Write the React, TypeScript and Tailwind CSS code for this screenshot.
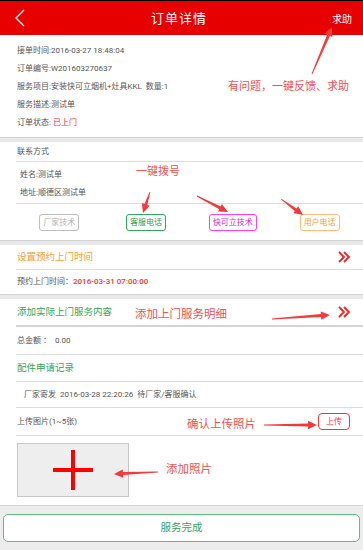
import React from "react";

function arrowPoints(x1: number, y1: number, x2: number, y2: number) {
  const dx = x2 - x1;
  const dy = y2 - y1;
  const L = Math.hypot(dx, dy);
  const ux = dx / L;
  const uy = dy / L;
  const nx = -uy;
  const ny = ux;
  const headLen = 9;
  const headW = 4.2;
  const w0 = 0.4;
  const w1 = 1.5;
  const bx = x2 - ux * headLen;
  const by = y2 - uy * headLen;
  const pts: [number, number][] = [
    [x1 + nx * w0, y1 + ny * w0],
    [bx + nx * w1, by + ny * w1],
    [bx + nx * headW, by + ny * headW],
    [x2, y2],
    [bx - nx * headW, by - ny * headW],
    [bx - nx * w1, by - ny * w1],
    [x1 - nx * w0, y1 - ny * w0],
  ];
  return pts.map((p) => p[0].toFixed(1) + "," + p[1].toFixed(1)).join(" ");
}

const arrows: [number, number, number, number][] = [
  [312, 74, 332, 27],
  [150, 192, 143, 213],
  [197, 196, 228, 212],
  [281, 199, 303, 215],
  [272, 319, 330, 315],
  [264, 425, 317, 425],
  [158, 472, 114, 474],
];

function Chevrons() {
  return (
    <svg width="14" height="14" viewBox="0 0 14 14" fill="none">
      <polyline points="2,2 7,7 2,12" stroke="#ff1f1f" strokeWidth="1.8" />
      <polyline points="7,2 12,7 7,12" stroke="#ff1f1f" strokeWidth="1.8" />
    </svg>
  );
}

export default function App() {
  return (
    <div className="relative w-[363px] min-h-[550px] bg-[#ededed] font-[family-name:Roboto,'Noto_Sans_CJK_SC',sans-serif] overflow-hidden">
      {/* Header */}
      <div className="h-[35px] border-t border-black bg-[#e60000] flex items-center justify-between px-[14px] text-white">
        <svg width="12" height="18" viewBox="0 0 12 18" fill="none">
          <polyline points="10,1 2,9 10,17" stroke="#ffffff" strokeWidth="1.3" />
        </svg>
        <div className="text-[13px] leading-none tracking-[1px]">订单详情</div>
        <div className="text-[10px] leading-none mr-[-3px] mt-[4px]">求助</div>
      </div>

      {/* Section 1 */}
      <div className="bg-white pt-[7px] pb-[5px] pl-[17px] text-[8px] text-[#555]">
        <div className="h-[18px] flex items-center">接单时间:2016-03-27 18:48:04</div>
        <div className="h-[18px] flex items-center">订单编号:W201603270637</div>
        <div className="h-[18px] flex items-center">服务项目:安装快可立烟机+灶具KKL&nbsp;&nbsp;数量:1</div>
        <div className="h-[18px] flex items-center">服务描述:测试单</div>
        <div className="h-[18px] flex items-center">
          订单状态:&nbsp;<span className="text-[#ff2d2d]">已上门</span>
        </div>
      </div>

      <div className="h-[5px] bg-[#e8e8e8] border-t border-[#d2d2d2]" />

      {/* Section 2 */}
      <div className="bg-white text-[8px] text-[#555]">
        <div className="ml-[16px] h-[20px] flex items-center border-b border-[#dcdcdc] pl-[1px]">联系方式</div>
        <div className="ml-[16px] border-b border-[#dcdcdc] pt-[4px] pb-[1px] pl-[4px]">
          <div className="h-[18px] flex items-center">姓名:测试单</div>
          <div className="h-[18px] flex items-center">地址:顺德区测试单</div>
        </div>
        <div className="grid grid-cols-4 pl-[16px] pt-[10px] pb-[9px]">
          <div className="flex justify-center">
            <div className="h-[17px] px-[3px] flex items-center rounded-[3px] border border-[#bdbdbd] text-[8px] text-[#b0b0b0]">厂家技术</div>
          </div>
          <div className="flex justify-center">
            <div className="h-[17px] px-[3px] flex items-center rounded-[3px] border border-[#2ea85c] text-[8px] text-[#2a9a52]">客服电话</div>
          </div>
          <div className="flex justify-center">
            <div className="h-[17px] px-[3px] flex items-center rounded-[3px] border border-[#ff3cff] text-[8px] text-[#e020e0]">快可立技术</div>
          </div>
          <div className="flex justify-center">
            <div className="h-[17px] px-[3px] flex items-center rounded-[3px] border border-[#ffbb77] text-[8px] text-[#f5a040]">用户电话</div>
          </div>
        </div>
      </div>

      <div className="h-[5px] bg-[#e8e8e8] border-t border-[#d2d2d2]" />

      {/* Section 3 */}
      <div className="bg-white">
        <div className="ml-[16px] h-[25px] flex items-center justify-between border-b border-[#dcdcdc] pl-[1px] pr-[12px]">
          <span className="text-[9.5px] text-[#f5a030]">设置预约上门时间</span>
          <Chevrons />
        </div>
        <div className="h-[24px] pl-[17px] flex items-center text-[8px] text-[#555]">
          预约上门时间：<span className="text-[#ff3030] font-medium">2016-03-31 07:00:00</span>
        </div>
      </div>

      <div className="h-[5px] bg-[#e8e8e8] border-t border-[#d2d2d2]" />

      {/* Section 4 */}
      <div className="bg-white text-[8px] text-[#555]">
        <div className="ml-[16px] h-[28px] flex items-center justify-between border-b-2 border-[#d4d4d4] pl-[1px] pr-[12px]">
          <span className="text-[9.5px] text-[#36a65a]">添加实际上门服务内容</span>
          <Chevrons />
        </div>
        <div className="ml-[16px] h-[28px] flex items-center border-b border-[#dcdcdc] pl-[1px]">
          总金额 ：&nbsp;&nbsp;0.00
        </div>
        <div className="ml-[16px] h-[27px] flex items-center border-b border-[#dcdcdc] pl-[1px] text-[9.5px] text-[#36a65a]">
          配件申请记录
        </div>
        <div className="ml-[16px] h-[26px] flex items-center border-b border-[#dcdcdc] pl-[8px]">
          厂家寄发&nbsp;&nbsp;2016-03-28 22:20:26&nbsp;&nbsp;待厂家/客服确认
        </div>
        <div className="ml-[16px] h-[28px] flex items-center justify-between border-b border-[#dcdcdc] pl-[1px] pr-[13px]">
          <span>上传图片(1~5张)</span>
          <div className="h-[17px] w-[32px] flex items-center justify-center rounded-[4px] border border-[#ff3030] text-[#ff3030] text-[8px]">上传</div>
        </div>
        <div className="pt-[7px] pb-[8px] pl-[17px]">
          <div className="w-[112px] h-[54px] bg-[#eeeeee] border border-[#c8c8c8] flex items-center justify-center">
            <svg width="42" height="42" viewBox="0 0 42 42">
              <rect x="19" y="1" width="4" height="40" fill="#ff0000" />
              <rect x="1" y="19" width="40" height="4" fill="#ff0000" />
            </svg>
          </div>
        </div>
      </div>

      {/* Bottom */}
      <div className="border-t border-[#d2d2d2] pt-[8px] px-[3px] pb-[7px]">
        <div className="h-[28px] bg-white rounded-[5px] border-[1.5px] border-[#5cc07c] flex items-center justify-center text-[10.5px] text-[#38a05c]">
          服务完成
        </div>
      </div>

      {/* Annotations overlay */}
      <svg className="absolute left-0 top-0 pointer-events-none" width="363" height="550" viewBox="0 0 363 550">
        {arrows.map((a, i) => (
          <polygon key={i} points={arrowPoints(a[0], a[1], a[2], a[3])} fill="#f23a3a" />
        ))}
      </svg>
      <div className="absolute left-[228px] top-[80px] text-[11px] leading-none text-[#f45050] whitespace-nowrap font-[family-name:'Noto_Sans_CJK_SC',sans-serif]">
        有问题，一键反馈、求助
      </div>
      <div className="absolute left-[136px] top-[165px] text-[11px] leading-none text-[#f45050] whitespace-nowrap font-[family-name:'Noto_Sans_CJK_SC',sans-serif]">
        一键拨号
      </div>
      <div className="absolute left-[135px] top-[308px] text-[11.5px] leading-none text-[#f45050] whitespace-nowrap font-[family-name:'Noto_Sans_CJK_SC',sans-serif]">
        添加上门服务明细
      </div>
      <div className="absolute left-[187px] top-[418px] text-[11.5px] leading-none text-[#f45050] whitespace-nowrap font-[family-name:'Noto_Sans_CJK_SC',sans-serif]">
        确认上传照片
      </div>
      <div className="absolute left-[166px] top-[463px] text-[11.5px] leading-none text-[#f45050] whitespace-nowrap font-[family-name:'Noto_Sans_CJK_SC',sans-serif]">
        添加照片
      </div>
    </div>
  );
}
